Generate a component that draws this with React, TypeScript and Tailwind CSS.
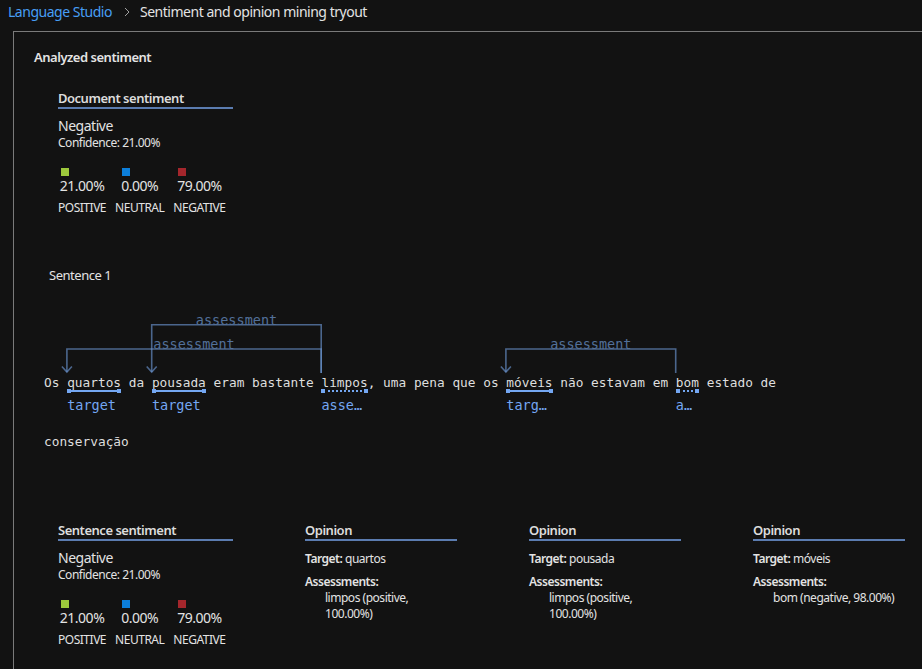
import React from "react";

const SANS = '"Segoe UI", "Noto Sans", "Open Sans", sans-serif';
const MONO = '"DejaVu Sans Mono", "Liberation Mono", monospace';

const cols = [
  { pct: "21.00%", label: "POSITIVE", sq: "bg-[#9dc83c]" },
  { pct: "0.00%", label: "NEUTRAL", sq: "bg-[#0c7fdb]" },
  { pct: "79.00%", label: "NEGATIVE", sq: "bg-[#a4262c]" },
];

function SentimentBlock({ title }: { title: string }) {
  return (
    <div className="w-[175px]">
      <div className="text-[13px] font-semibold leading-[18px] text-[#dcdcdc] border-b-2 border-[#5b7cb0]">
        {title}
      </div>
      <div className="mt-[8px] text-[14px] leading-[18px]">Negative</div>
      <div className="text-[12px] leading-[16px]">Confidence: 21.00%</div>
      <div className="mt-[17px] flex gap-[9px]">
        {cols.map((c) => (
          <div key={c.label} className="flex flex-col items-center">
            <div className="flex flex-col items-start">
              <div className={`w-[8px] h-[8px] ml-[1px] ${c.sq}`} />
              <div className="mt-[1px] text-[14px] leading-[18px]">{c.pct}</div>
            </div>
            <div className="mt-[5px] text-[12px] leading-[16px]">{c.label}</div>
          </div>
        ))}
      </div>
    </div>
  );
}

function Opinion({ target, assess }: { target: string; assess: string }) {
  return (
    <div className="w-[224px] shrink-0 text-[12px] leading-[16px]">
      <div className="w-[152px] text-[13px] font-semibold leading-[18px] text-[#dcdcdc] border-b-2 border-[#5b7cb0]">
        Opinion
      </div>
      <div className="mt-[10px]">
        <span className="font-semibold">Target:</span> {target}
      </div>
      <div className="mt-[7px] font-semibold">Assessments:</div>
      <div className="w-[152px] pl-[20px]">{assess}</div>
    </div>
  );
}

function Ann({ word, label, dotted }: { word: string; label: string; dotted?: boolean }) {
  return (
    <span className="relative inline-block leading-[59px]">
      {word}
      {dotted ? (
        <span className="absolute left-[2px] right-[2px] top-[37px] h-0 border-t-2 border-dotted border-[#74a7f2]" />
      ) : (
        <span className="absolute left-[2px] right-[2px] top-[37px] h-[2px] bg-[#74a7f2]" />
      )}
      <span className="absolute left-0 top-[36px] w-[4px] h-[4px] bg-[#74a7f2]" />
      <span className="absolute right-0 top-[36px] w-[4px] h-[4px] bg-[#74a7f2]" />
      <span className="absolute left-0 right-0 top-[44px] text-[13.5px] leading-[16px] text-[#74a7f2] whitespace-nowrap overflow-hidden text-ellipsis">
        {label}
      </span>
    </span>
  );
}

function ArcLabel({ x, top }: { x: number; top: number }) {
  return (
    <span
      className="absolute -translate-x-1/2 text-[13.5px] leading-[16px] text-[#52709a] whitespace-nowrap"
      style={{ left: x, top }}
    >
      assessment
    </span>
  );
}

function Sentence() {
  const stroke = "rgba(105,145,205,0.66)";
  return (
    <div
      className="relative ml-[10px] mt-[16px] w-[790px] pt-[53px] text-[12.8px] leading-[59px] tracking-normal text-[#dedede]"
      style={{ fontFamily: MONO }}
    >
      <svg className="absolute left-0 top-0 overflow-visible pointer-events-none" width="700" height="80">
        <g fill="none" stroke={stroke} strokeWidth="1.6">
          <path d="M277.2 73 V24.7 H107.7 V72" />
          <path d="M102.7 66.5 L107.7 72 L112.7 66.5" />
          <path d="M277.2 73 V49 H22.9 V72" />
          <path d="M17.9 66.5 L22.9 72 L27.9 66.5" />
          <path d="M631.7 73 V49 H461.9 V72" />
          <path d="M456.9 66.5 L461.9 72 L466.9 66.5" />
        </g>
      </svg>
      <ArcLabel x={192.5} top={12} />
      <ArcLabel x={150} top={35.5} />
      <ArcLabel x={546.8} top={35.5} />
      Os <Ann word="quartos" label="target" /> da <Ann word="pousada" label="target" /> eram bastante{" "}
      <Ann word="limpos" label="assessment" dotted />, uma pena que os <Ann word="móveis" label="target" /> não
      estavam em <Ann word="bom" label="assessment" dotted /> estado de conservação
    </div>
  );
}

export default function App() {
  return (
    <div
      className="min-h-screen bg-[#121212] text-[#e3e3e3] overflow-hidden tracking-[-0.03em]"
      style={{ fontFamily: SANS }}
    >
      <div className="h-[31px] pl-[8px] pt-[2px]">
        <div className="flex items-center h-[20px] text-[14px] leading-[20px]">
          <span className="text-[#479ef5]">Language Studio</span>
          <svg width="6" height="10" viewBox="0 0 6 10" className="ml-[12px] mr-[10px]">
            <path d="M1 1 L5 5 L1 9" fill="none" stroke="#a0a0a0" strokeWidth="1" />
          </svg>
          <span>Sentiment and opinion mining tryout</span>
        </div>
      </div>
      <div className="ml-[13px] border-l border-t border-[#7a7a7a] pl-[20px] pt-[16px] pb-[20px] min-h-[638px]">
        <div className="text-[13px] font-semibold leading-[18px]">Analyzed sentiment</div>
        <div className="ml-[24px] mt-[23px]">
          <SentimentBlock title="Document sentiment" />
        </div>
        <div className="ml-[15px] mt-[50px] text-[13px] leading-[18px]">Sentence 1</div>
        <Sentence />
        <div className="ml-[24px] mt-[50px] flex">
          <div className="w-[247px] shrink-0">
            <SentimentBlock title="Sentence sentiment" />
          </div>
          <Opinion target="quartos" assess="limpos (positive, 100.00%)" />
          <Opinion target="pousada" assess="limpos (positive, 100.00%)" />
          <Opinion target="móveis" assess="bom (negative, 98.00%)" />
        </div>
      </div>
    </div>
  );
}
